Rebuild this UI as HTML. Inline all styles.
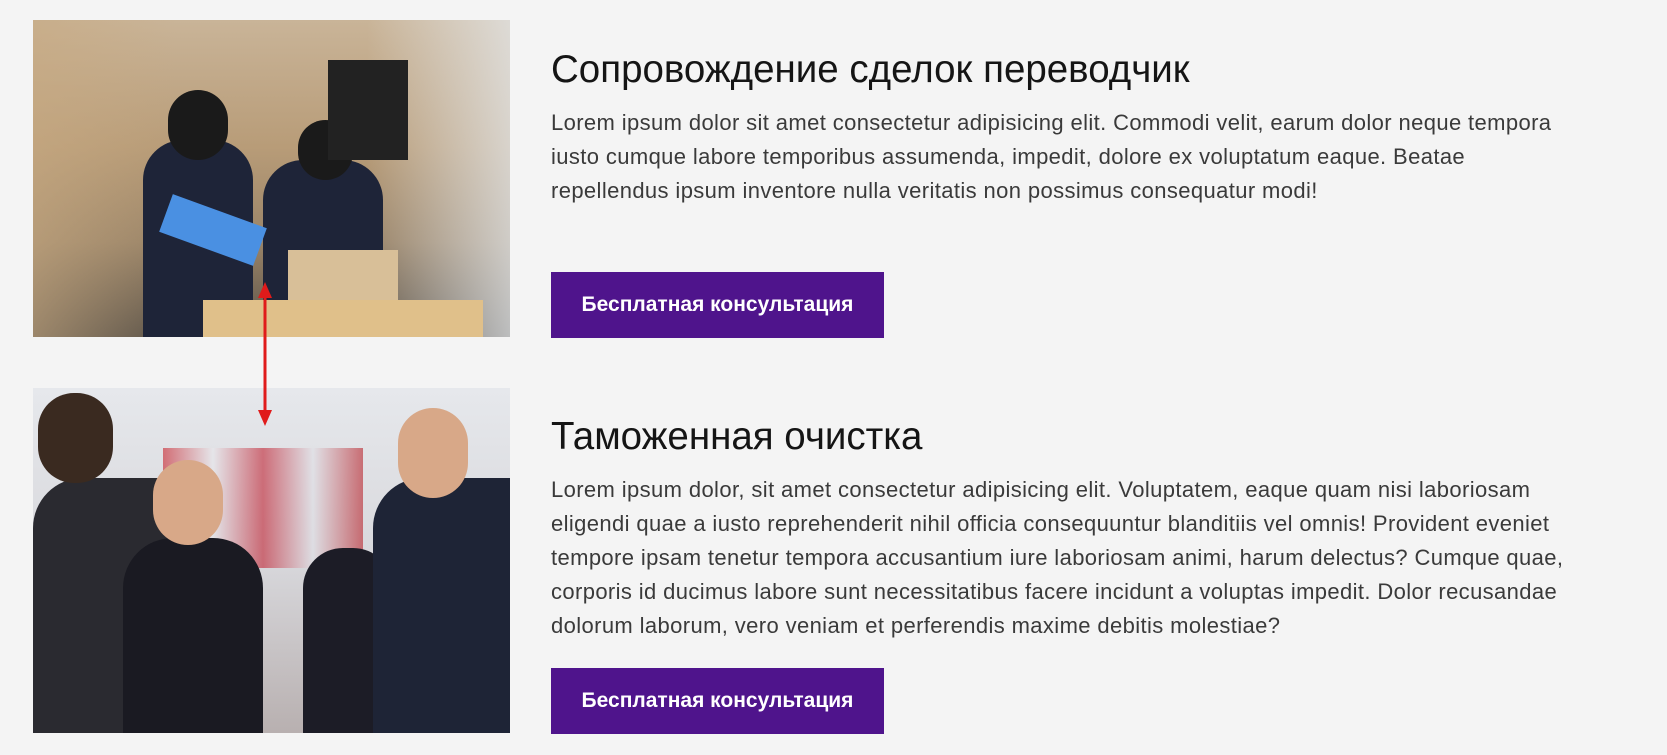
<!DOCTYPE html>
<html><head><meta charset="utf-8"><style>
body{margin:0;width:1667px;height:755px;background:#f4f4f4;position:relative;overflow:hidden;font-family:"Liberation Sans",Arial,sans-serif;}
.img{position:absolute;left:33px;width:477px;overflow:hidden;}
h2{position:absolute;left:551px;margin:0;font-weight:400;font-size:38.5px;color:#151515;white-space:nowrap;letter-spacing:0;}
.p{position:absolute;left:551px;font-size:22px;letter-spacing:0.38px;line-height:34px;color:#3a3a3a;white-space:nowrap;}
.btn{position:absolute;left:551px;width:333px;height:66px;background:#4f148c;color:#fff;font-weight:700;font-size:21px;display:flex;align-items:center;justify-content:center;}
</style></head><body>
<div class="img" style="top:20px;height:317px;background:linear-gradient(180deg,#c9b498 0%,#b89c78 40%,#9a8468 70%,#5a5248 100%);">
 <div style="position:absolute;left:0;top:0;width:477px;height:317px;background:linear-gradient(90deg,rgba(200,170,130,.6) 0%,rgba(0,0,0,0) 30%,rgba(0,0,0,0) 70%,rgba(230,235,240,.7) 100%);"></div>
 <div style="position:absolute;left:110px;top:120px;width:110px;height:197px;background:#1e2438;border-radius:40px 40px 0 0;"></div>
 <div style="position:absolute;left:135px;top:70px;width:60px;height:70px;background:#1a1a1a;border-radius:30px;"></div>
 <div style="position:absolute;left:230px;top:140px;width:120px;height:177px;background:#1e2438;border-radius:40px 40px 0 0;"></div>
 <div style="position:absolute;left:265px;top:100px;width:55px;height:60px;background:#1a1a1a;border-radius:28px;"></div>
 <div style="position:absolute;left:130px;top:190px;width:100px;height:40px;background:#4a90e2;transform:rotate(20deg);"></div>
 <div style="position:absolute;left:255px;top:230px;width:110px;height:65px;background:#d8bf98;"></div>
 <div style="position:absolute;left:170px;top:280px;width:280px;height:37px;background:#e0c08a;"></div>
 <div style="position:absolute;left:295px;top:40px;width:80px;height:100px;background:#222;"></div>
</div>
<div class="img" style="top:388px;height:345px;background:linear-gradient(180deg,#e6e8ec 0%,#d8d8dc 50%,#b8b0b0 100%);">
 <div style="position:absolute;left:130px;top:60px;width:200px;height:120px;background:linear-gradient(90deg,#c8202a,#e8e8ec,#c02030,#e0e0e6,#b82028);opacity:.6;"></div>
 <div style="position:absolute;left:0;top:90px;width:175px;height:255px;background:#2a2a30;border-radius:50px 50px 0 0;"></div>
 <div style="position:absolute;left:5px;top:5px;width:75px;height:90px;background:#3a2a20;border-radius:36px;"></div>
 <div style="position:absolute;left:90px;top:150px;width:140px;height:195px;background:#1a1a22;border-radius:50px 50px 0 0;"></div>
 <div style="position:absolute;left:120px;top:72px;width:70px;height:85px;background:#d8a888;border-radius:35px;"></div>
 <div style="position:absolute;left:270px;top:160px;width:90px;height:185px;background:#1c1c26;border-radius:40px 40px 0 0;"></div>
 <div style="position:absolute;left:340px;top:90px;width:137px;height:255px;background:#1e2436;border-radius:50px 0 0 0;"></div>
 <div style="position:absolute;left:365px;top:20px;width:70px;height:90px;background:#d8a888;border-radius:35px;"></div>
</div>
<svg style="position:absolute;left:255px;top:280px" width="20" height="150"><line x1="10" y1="10" x2="10" y2="138" stroke="#e01b1b" stroke-width="3"/><polygon points="10,2 3,18 17,18" fill="#e01b1b"/><polygon points="10,146 3,130 17,130" fill="#e01b1b"/></svg>
<h2 style="top:48px">Сопровождение сделок переводчик</h2>
<div class="p" style="top:106px">Lorem ipsum dolor sit amet consectetur adipisicing elit. Commodi velit, earum dolor neque tempora<br>iusto cumque labore temporibus assumenda, impedit, dolore ex voluptatum eaque. Beatae<br>repellendus ipsum inventore nulla veritatis non possimus consequatur modi!</div>
<div class="btn" style="top:272px">Бесплатная консультация</div>
<h2 style="top:415px">Таможенная очистка</h2>
<div class="p" style="top:473px">Lorem ipsum dolor, sit amet consectetur adipisicing elit. Voluptatem, eaque quam nisi laboriosam<br>eligendi quae a iusto reprehenderit nihil officia consequuntur blanditiis vel omnis! Provident eveniet<br>tempore ipsam tenetur tempora accusantium iure laboriosam animi, harum delectus? Cumque quae,<br>corporis id ducimus labore sunt necessitatibus facere incidunt a voluptas impedit. Dolor recusandae<br>dolorum laborum, vero veniam et perferendis maxime debitis molestiae?</div>
<div class="btn" style="top:668px">Бесплатная консультация</div>
</body></html>
